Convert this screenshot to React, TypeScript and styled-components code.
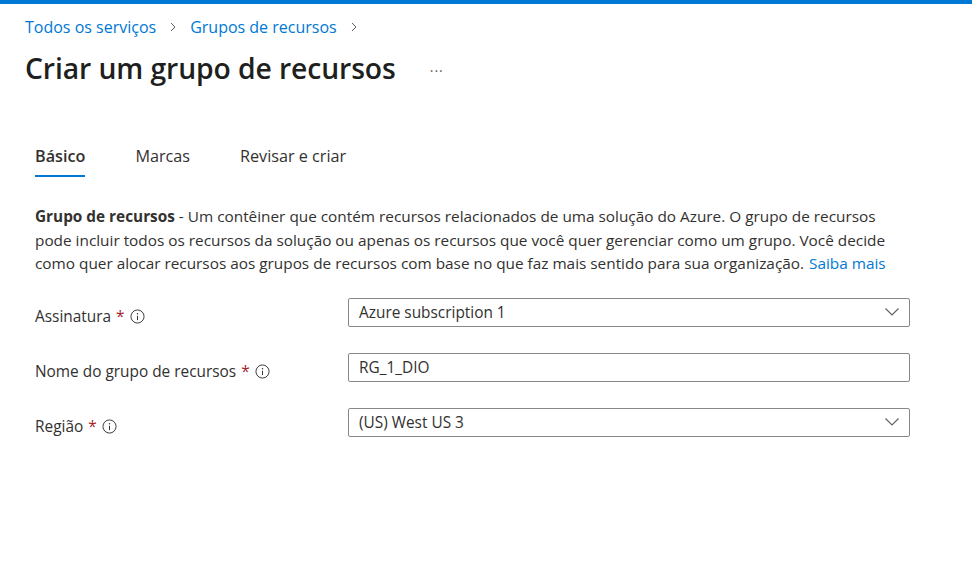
import styled, { createGlobalStyle } from "styled-components"

const GlobalStyle = createGlobalStyle`
  body {
    margin: 0;
    background: #fff;
    font-family: "Open Sans", "Noto Sans", sans-serif;
    color: #323130;
  }
`

const TopBar = styled.div`
  height: 4px;
  background-color: #0078d4;
`
const Page = styled.div`
  padding: 0 25px;
`
const Breadcrumb = styled.nav`
  display: flex;
  align-items: center;
  gap: 12px;
  height: 45px;
  font-size: 16px;
`
const Crumb = styled.a`
  color: #0078d4;
  text-decoration: none;
`
const Chevron = styled.svg`
  width: 10px;
  height: 10px;
  margin-top: 1px;
`
const TitleRow = styled.div`
  display: flex;
  align-items: center;
  gap: 34px;
  height: 38px;
`
const Title = styled.h1`
  margin: 0;
  font-size: 28.3px;
  font-weight: 600;
  color: #201f1e;
  letter-spacing: -0.1px;
`
const More = styled.span`
  font-size: 14px;
  color: #605e5c;
  letter-spacing: 1px;
  margin-top: 4px;
`
const Content = styled.div`
  padding: 0 10px;
`
const Tabs = styled.div`
  display: flex;
  gap: 50px;
  margin-top: 50px;
`
const Tab = styled.div<{ active?: boolean }>`
  display: flex;
  align-items: center;
  height: 38px;
  font-size: 16.2px;
  font-weight: ${(p) => (p.active ? 600 : 400)};
  color: #323130;
  border-bottom: 2px solid ${(p) => (p.active ? "#0078d4" : "transparent")};
`
const Description = styled.p`
  margin: 28px 0 0;
  font-size: 15.35px;
  line-height: 23.5px;
  color: #323130;
  white-space: nowrap;
`
const Strong = styled.b`
  font-weight: 700;
`
const Link = styled.a`
  color: #0078d4;
  text-decoration: none;
  margin-left: 5px;
`
const Form = styled.div`
  display: flex;
  flex-direction: column;
  gap: 26px;
  margin-top: 22px;
`
const Row = styled.div`
  display: grid;
  grid-template-columns: 313px 562px;
  align-items: start;
  height: 29px;
`
const Label = styled.label`
  display: flex;
  align-items: center;
  gap: 5px;
  height: 20px;
  margin-top: 9px;
  font-size: 15.4px;
  color: #323130;
`
const Required = styled.span`
  color: #a4262c;
`
const Field = styled.div`
  display: flex;
  align-items: center;
  justify-content: space-between;
  box-sizing: border-box;
  height: 29px;
  padding: 0 10px;
  border: 1px solid #8a8886;
  border-radius: 2px;
  font-size: 15.4px;
  color: #323130;
`

function InfoIcon() {
  return (
    <svg width="15" height="15" viewBox="0 0 16 16" fill="none">
      <circle cx="8" cy="8" r="7" stroke="#323130" strokeWidth="1" />
      <circle cx="8" cy="5" r="0.8" fill="#323130" />
      <path d="M8 7.2v4.6" stroke="#323130" strokeWidth="1.1" />
    </svg>
  )
}

function ChevronDown() {
  return (
    <svg width="14" height="8" viewBox="0 0 14 8" fill="none">
      <path d="M0.5 0.5 7 7 13.5 0.5" stroke="#605e5c" strokeWidth="1.1" />
    </svg>
  )
}

function FormRow({ label, value, select }: { label: string; value: string; select?: boolean }) {
  return (
    <Row>
      <Label>
        {label} <Required>*</Required>
        <InfoIcon />
      </Label>
      <Field>
        {value}
        {select && <ChevronDown />}
      </Field>
    </Row>
  )
}

export default function App() {
  return (
    <>
      <GlobalStyle />
      <TopBar />
      <Page>
        <Breadcrumb>
          <Crumb>Todos os serviços</Crumb>
          <Chevron viewBox="0 0 10 10">
            <path d="M3 1 7 5 3 9" stroke="#605e5c" strokeWidth="1" fill="none" />
          </Chevron>
          <Crumb>Grupos de recursos</Crumb>
          <Chevron viewBox="0 0 10 10">
            <path d="M3 1 7 5 3 9" stroke="#605e5c" strokeWidth="1" fill="none" />
          </Chevron>
        </Breadcrumb>
        <TitleRow>
          <Title>Criar um grupo de recursos</Title>
          <More>···</More>
        </TitleRow>
        <Content>
          <Tabs>
            <Tab active>Básico</Tab>
            <Tab>Marcas</Tab>
            <Tab>Revisar e criar</Tab>
          </Tabs>
          <Description>
            <Strong>Grupo de recursos</Strong> - Um contêiner que contém recursos relacionados de uma solução do Azure. O grupo de recursos
            <br />
            pode incluir todos os recursos da solução ou apenas os recursos que você quer gerenciar como um grupo. Você decide
            <br />
            como quer alocar recursos aos grupos de recursos com base no que faz mais sentido para sua organização.
            <Link>Saiba mais</Link>
          </Description>
          <Form>
            <FormRow label="Assinatura" value="Azure subscription 1" select />
            <FormRow label="Nome do grupo de recursos" value="RG_1_DIO" />
            <FormRow label="Região" value="(US) West US 3" select />
          </Form>
        </Content>
      </Page>
    </>
  )
}
